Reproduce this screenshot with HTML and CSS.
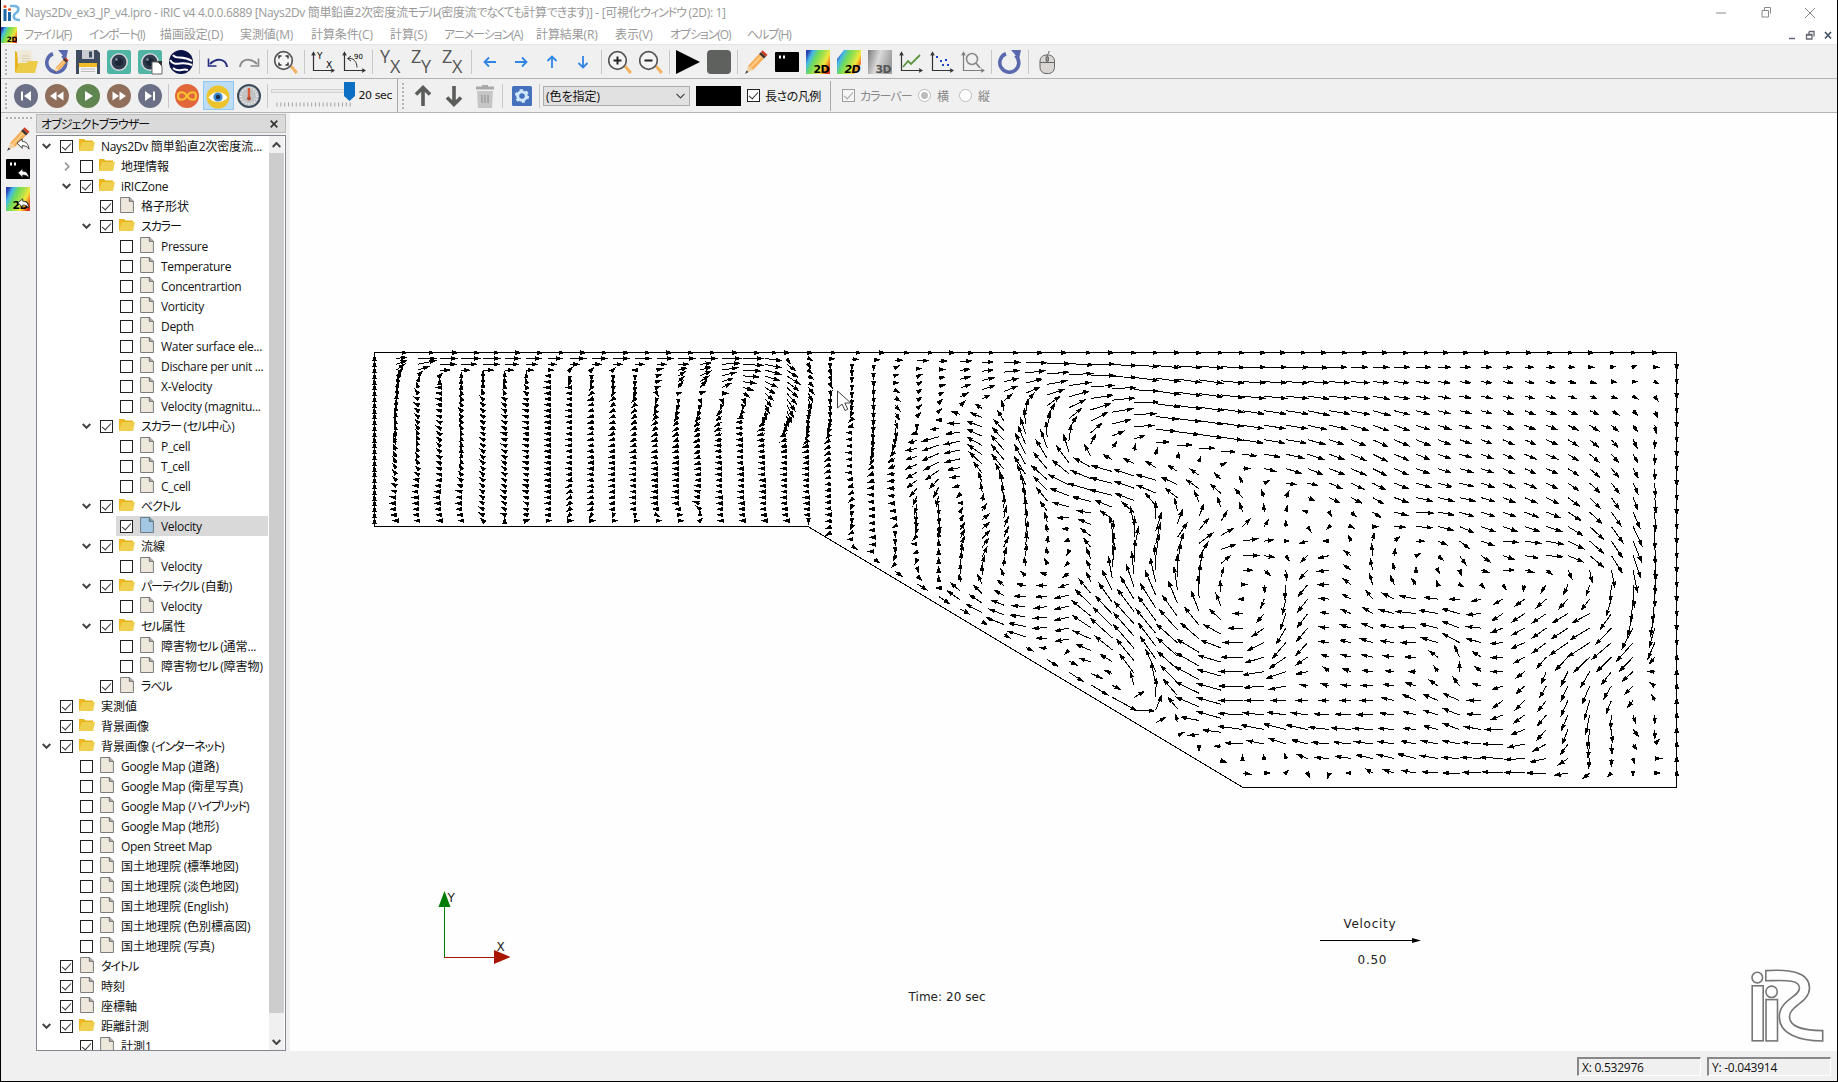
FILE: index.html
```html
<!DOCTYPE html>
<html lang="ja">
<head>
<meta charset="utf-8">
<title>iRIC</title>
<link rel="stylesheet" href="styles.css">
</head>
<body>
<svg class="defs" aria-hidden="true">
  <defs>
    <linearGradient id="rainbow" x1="0" y1="0.25" x2="1" y2="0.75">
      <stop offset="0" stop-color="#2a3fb0"/><stop offset="0.16" stop-color="#45b8e8"/><stop offset="0.36" stop-color="#6edc5a"/>
      <stop offset="0.55" stop-color="#a8e04c"/><stop offset="0.74" stop-color="#f2e83c"/><stop offset="0.88" stop-color="#f08a28"/><stop offset="1" stop-color="#e0301e"/>
    </linearGradient>
    <linearGradient id="greys" x1="0" y1="0" x2="1" y2="0.3">
      <stop offset="0" stop-color="#7c7c7c"/><stop offset="0.5" stop-color="#dadada"/><stop offset="1" stop-color="#a0a0a0"/>
    </linearGradient>
    <symbol id="folder" viewBox="0 0 16 14"><path d="M0 12V1h5l1.5 1.5H14V4H3z" fill="#e8b41c"/><path d="M3.2 4H16l-2 9H0z" fill="#eed04e"/><path d="M0 2v11l3-8V2z" fill="#edb820"/></symbol>
    <symbol id="page" viewBox="0 0 14 16"><path d="M.6.5h9L13.4 4v11.5H.6z" fill="#eee8dc" stroke="#7c7c7c"/><path d="M9.3.5V4.300h4" fill="#bbb" stroke="#666"/></symbol>
    <symbol id="page-on" viewBox="0 0 14 16"><path d="M.6.5h9L13.4 4v11.5H.6z" fill="#a2c8e4" stroke="#6c7c88"/><path d="M9.3.5V4.300h4" fill="#8ab" stroke="#566"/></symbol>
    <symbol id="pencil" viewBox="0 0 24 24"><path d="M4 16L15 4l5 4.500L9 20z" fill="#f6ac54"/><path d="M6 18L17.500 6" stroke="#fbcb85" stroke-width="2"/><path d="M15 4l2-2 5 4.500-2 2z" fill="#45352e"/><path d="M17 2l1.500-1.700 5 4.500L22 6.500z" fill="#d23c22"/><path d="M4 16l5 4-7 3z" fill="#f1d3a4"/><path d="M1 24l1.500-3.500L4.500 22z" fill="#3b3f55"/></symbol>
    <symbol id="reply" viewBox="0 0 16 14"><path d="M1 6l6-5v3c5 0 7 3 8 9-2-3-4-4-8-4v3z" fill="#fff" stroke="#222"/></symbol>
    <symbol id="console" viewBox="0 0 24 24"><rect y="2" width="24" height="20" rx="1"/><path d="M4 5.500h2v3H4zM8 5.500h2v3H8z" fill="#fff"/></symbol>
    <symbol id="lens" viewBox="0 0 24 24"><path d="M16 17l2-2 6 7-2.500 2z" fill="#f3b260"/><circle cx="9.500" cy="10.500" r="8.800" fill="#f4f4f4" stroke="#55575a" stroke-width="1.700"/></symbol>
    <symbol id="axes" viewBox="0 0 24 24"><path d="M2.500 3v17.500H22M.8 5.500L2.500 2.500l1.700 3M20 18.800l3 1.700-3 1.700" fill="none" stroke="#333" stroke-width="1.200"/></symbol>
    <symbol id="spin" viewBox="0 0 24 24"><path d="M17.500 5.500A9.500 9.500 0 1 1 8 3.800" fill="none" stroke="#5a69ae" stroke-width="3.600"/><path d="M13 0h10l-2 9z" fill="#5a69ae"/></symbol>
    <symbol id="camera" viewBox="0 0 24 24"><rect width="24" height="24" rx="2.500" fill="#50b5a4"/><circle cx="12" cy="12" r="9" fill="#d2d6da"/><circle cx="12" cy="12" r="7.400" fill="#303c4e"/><circle cx="12" cy="12" r="4" fill="#1d2636"/><circle cx="9.500" cy="9.500" r="1.300" fill="#8c98a8"/></symbol>
  </defs>
</svg>
<div class="window">
  <header class="titlebar">
    <svg class="app-icon" width="18" height="18" viewBox="0 0 18 18"><path d="M2 5v12M6.500 8v9" stroke="#1d67a8" stroke-width="3"/><circle cx="2" cy="2.500" r="1.600" fill="#e0552b"/><circle cx="6.500" cy="5.500" r="1.600" fill="#e0552b"/><path d="M7 2h4c6 0 5 5 2 7s-4 7 4 7" fill="none" stroke="#74b4e2" stroke-width="2.600"/></svg>
    <span class="title">Nays2Dv_ex3_JP_v4.ipro - iRIC v4 4.0.0.6889 [Nays2Dv 簡単鉛直2次密度流<span class="kana">モデル</span>(密度流<span class="kana">でなくても</span>計算<span class="kana">できます</span>)] - [可視化<span class="kana">ウィンドウ</span> (2D): 1]</span>
    <svg class="caption" width="110" height="14" viewBox="0 0 110 14"><path d="M2 7h10M50.500 1.500h6v6M48 4.500h6.500V11H48zM50.500 4V1.500M91 2l10 10M101 2L91 12" fill="none" stroke="#8a8a8a"/></svg>
  </header>
  <nav class="menubar">
    <svg class="mdi-icon" width="16" height="16" viewBox="0 0 24 24"><rect width="24" height="24" fill="url(#rainbow)"/><text x="24" y="23" text-anchor="end" class="icon-text">2D</text></svg>
    <span class="m1 kana">ファイル(F)</span><span class="m2 kana">インポート(I)</span><span class="m3">描画設定(D)</span><span class="m4">実測値(M)</span><span class="m5">計算条件(C)</span><span class="m6">計算(S)</span><span class="m7 kana">アニメーション(A)</span><span class="m8">計算結果(R)</span><span class="m9">表示(V)</span><span class="m10 kana">オプション(O)</span><span class="m11 kana">ヘルプ(H)</span>
    <svg class="mdi-controls" width="50" height="12" viewBox="0 0 50 12"><path d="M2 9.500h6M22 2.500h5v5M19.500 5.500H25V10h-5.500zM22 5V2.500M19.500 6H25" fill="none" stroke="#667" stroke-width="1.300"/><path d="M38 3l6 6.500M44 3l-6 6.500" stroke="#456" stroke-width="1.700"/></svg>
  </nav>
  <div class="toolbar">
    <i class="grip"></i>
    <b><svg viewBox="0 0 24 24"><path d="M1 23V1l2 1 4 14z" fill="#e6b51e"/><path d="M3 1l14-1 2 14H4z" fill="#f0e9d8"/><path d="M8 6h7M8 8.500h8M8 11h8" stroke="#d8cdb5"/><path d="M1 23l4-10h7l3-2h9l-3 12z" fill="#eccb48"/></svg></b>
    <b><svg viewBox="0 0 24 24"><use href="#spin"/><use href="#pencil" x="8" y="7" width="16" height="16"/></svg></b>
    <b><svg viewBox="0 0 24 24"><path d="M0 0h21l3 3v21H0z" fill="#3f4c60"/><path d="M6 0h12v9H6z" fill="#c9cdd1"/><path d="M13 1.500h3v6h-3z" fill="#3f4c60"/><path d="M3 13h18v11H3z" fill="#f2f2f2"/><path d="M3 13h18v4H3z" fill="#efba27"/><path d="M5 19h14M5 21.500h14" stroke="#bbb"/></svg></b>
    <b><svg viewBox="0 0 24 24"><use href="#camera"/></svg></b>
    <b><svg viewBox="0 0 24 24"><use href="#camera"/><path d="M14 12h6l4 4v8H14z" fill="#fff" stroke="#666"/><path d="M19 11h5v5z" fill="#333"/></svg></b>
    <b><svg viewBox="0 0 24 24"><circle cx="12" cy="12" r="12" fill="#0b1246"/><path d="M4 5c3 5 9 0 19 6M1 10c5 8 11 0 22 5M4 18c5 5 9 0 15 2" fill="none" stroke="#fff" stroke-width="2"/></svg></b>
    <i class="sep"></i>
    <b><svg viewBox="0 0 24 24"><path d="M21 17c-1-8-10-10-17-3" fill="none" stroke="#242e80" stroke-width="2"/><path d="M2.500 8.500v7.500h8" fill="none" stroke="#242e80" stroke-width="1.600"/></svg></b>
    <b><svg viewBox="0 0 24 24"><path d="M3 17c1-8 10-10 17-3" fill="none" stroke="#8b8b8b" stroke-width="2"/><path d="M21.500 8.500v7.500h-8" fill="none" stroke="#8b8b8b" stroke-width="1.600"/></svg></b>
    <i class="sep"></i>
    <b><svg viewBox="0 0 24 24"><use href="#lens"/><path d="M5 8.500V6h2.500M11.500 6H14v2.500M14 12.500V15h-2.500M7.500 15H5v-2.500" fill="none" stroke="#333" stroke-width="1.500"/></svg></b>
    <i class="sep"></i>
    <b><svg viewBox="0 0 24 24"><use href="#axes"/><text x="6" y="9" class="axis-text">Y</text><text x="15" y="18" class="axis-text">X</text></svg></b>
    <b><svg viewBox="0 0 24 24"><use href="#axes"/><path d="M6 8.500c5-1 9 3 9 9M9 6L5.500 8.500 9 11" fill="none" stroke="#333"/><text x="12" y="9" class="small-text">90</text></svg></b>
    <i class="sep"></i>
    <b><svg viewBox="0 0 24 24"><text x="1" y="13" class="plane-text">Y</text><text x="11" y="23" class="plane-text">X</text></svg></b>
    <b><svg viewBox="0 0 24 24"><text x="1" y="13" class="plane-text">Z</text><text x="11" y="23" class="plane-text">Y</text></svg></b>
    <b><svg viewBox="0 0 24 24"><text x="1" y="13" class="plane-text">Z</text><text x="11" y="23" class="plane-text">X</text></svg></b>
    <i class="sep"></i>
    <b><svg viewBox="0 0 24 24"><path d="M18 12H7m4-4.500L6.500 12l4.500 4.500" class="move"/></svg></b>
    <b><svg viewBox="0 0 24 24"><path d="M6 12h11m-4-4.500l4.500 4.500-4.500 4.500" class="move"/></svg></b>
    <b><svg viewBox="0 0 24 24"><path d="M12 18V7m-4.500 4L12 6.500l4.500 4.500" class="move"/></svg></b>
    <b><svg viewBox="0 0 24 24"><path d="M12 6v11m-4.500-4l4.500 4.500 4.500-4.500" class="move"/></svg></b>
    <i class="sep"></i>
    <b><svg viewBox="0 0 24 24"><use href="#lens"/><path d="M5.500 10.500h8M9.500 6.500v8" stroke="#222" stroke-width="2"/></svg></b>
    <b><svg viewBox="0 0 24 24"><use href="#lens"/><path d="M5.500 10.500h8" stroke="#222" stroke-width="2"/></svg></b>
    <i class="sep"></i>
    <b><svg viewBox="0 0 24 24"><path d="M0 0l24 12L0 24z"/></svg></b>
    <b><svg viewBox="0 0 24 24"><rect width="24" height="24" rx="4" fill="#5f615f"/></svg></b>
    <i class="sep"></i>
    <b><svg viewBox="0 0 24 24"><use href="#pencil"/></svg></b>
    <b><svg viewBox="0 0 24 24"><use href="#console"/></svg></b>
    <b><svg viewBox="0 0 24 24"><rect width="24" height="24" fill="url(#rainbow)"/><text x="23" y="23" text-anchor="end" class="icon-text">2D</text></svg></b>
    <b><svg viewBox="0 0 24 24"><path d="M7 0h17v14l-7 10H0V9z" fill="url(#rainbow)"/><text x="23" y="23" text-anchor="end" class="icon-text slanted">2D</text></svg></b>
    <b><svg viewBox="0 0 24 24"><rect width="24" height="24" fill="url(#greys)"/><text x="23" y="23" text-anchor="end" class="icon-text dim">3D</text></svg></b>
    <b><svg viewBox="0 0 24 24"><use href="#axes"/><path d="M4 17l5-6 3 3 9-9" fill="none" stroke="#5c9440" stroke-width="1.800"/></svg></b>
    <b><svg viewBox="0 0 24 24"><use href="#axes"/><path d="M6 6h2v2H6zM10 10h2v2h-2zM15 9h2v2h-2zM12 14h2v2h-2zM17 14h2v2h-2z" fill="#1b43c8"/></svg></b>
    <b class="faded"><svg viewBox="0 0 24 24"><use href="#axes"/><circle cx="11" cy="9" r="5.500" fill="none" stroke="#444" stroke-width="1.500"/><path d="M15 13l4 5" stroke="#444" stroke-width="1.800"/></svg></b>
    <i class="sep"></i>
    <b><svg viewBox="0 0 24 24"><use href="#spin"/></svg></b>
    <i class="sep"></i>
    <b><svg viewBox="0 0 24 24"><path d="M12 7c0-4 2-2 2-6" fill="none" stroke="#555"/><rect x="5" y="5" width="14.500" height="18.500" rx="6" fill="#d8d5d2" stroke="#666"/><path d="M5 12.500h14.500M12.200 5v7" stroke="#666"/><rect x="11" y="7" width="2.500" height="4" fill="#999" stroke="#555" stroke-width=".7"/></svg></b>
  </div>
  <div class="toolbar second">
    <i class="grip"></i>
    <b><svg viewBox="0 0 24 24"><circle cx="12" cy="12" r="12" fill="#6b7086"/><path d="M8 7.500v9" stroke="#fff" stroke-width="2"/><path d="M17 7v10l-7-5z" fill="#fff"/></svg></b>
    <b><svg viewBox="0 0 24 24"><circle cx="12" cy="12" r="12" fill="#8f6f5c"/><path d="M11.500 7.500v9L5 12zM18.500 7.500v9L12 12z" fill="#fff"/></svg></b>
    <b><svg viewBox="0 0 24 24"><circle cx="12" cy="12" r="12" fill="#5f8550"/><path d="M9 7v10l8-5z" fill="#fff"/></svg></b>
    <b><svg viewBox="0 0 24 24"><circle cx="12" cy="12" r="12" fill="#8f6f5c"/><path d="M5.500 7.500v9L12 12zM12.500 7.500v9L19 12z" fill="#fff"/></svg></b>
    <b><svg viewBox="0 0 24 24"><circle cx="12" cy="12" r="12" fill="#6b7086"/><path d="M16 7.500v9" stroke="#fff" stroke-width="2"/><path d="M7 7v10l7-5z" fill="#fff"/></svg></b>
    <i class="sep"></i>
    <b><svg viewBox="0 0 24 24"><circle cx="12" cy="12" r="12" fill="#e1663a"/><path d="M12 12c-3-5-9-5-9 0s6 5 9 0 9-5 9 0-6 5-9 0z" fill="none" stroke="#f7c032" stroke-width="2.200"/></svg></b>
    <b class="active"><svg viewBox="0 0 24 24"><circle cx="12" cy="13" r="11.500" fill="#edc32c"/><path d="M2.500 13.500C7 6.500 17 6.500 21.500 13.500 17 19.500 7 19.500 2.500 13.500z" fill="#fff"/><circle cx="12" cy="13" r="4.600" fill="#3a86d0"/><circle cx="12" cy="13" r="2.200" fill="#1d2f4c"/></svg></b>
    <b><svg viewBox="0 0 24 24"><circle cx="12" cy="12" r="11" fill="#c2c4c6" stroke="#3f4b5a" stroke-width="2"/><circle cx="12" cy="12" r="8" fill="none" stroke="#eee" stroke-dasharray="1 2" stroke-width="2"/><path d="M12 4v10" stroke="#d9603b" stroke-width="2.400"/><circle cx="12" cy="14.500" r="2" fill="#b04c30"/></svg></b>
    <i class="sep"></i>
    <svg class="slider" width="88" height="30" viewBox="0 0 88 30"><rect x=".5" y="8.500" width="79" height="3" fill="#e8e9e9" stroke="#d2d2d2"/><path d="M5.500 23.500h75" stroke="#a8a29c" stroke-width="4" stroke-dasharray="1 2.850"/><path d="M73 1h11v14l-5.500 5-5.500-5z" fill="#0d6fc4"/></svg>
    <span class="seconds">20 sec</span>
    <i class="edge"></i>
    <i class="grip"></i>
    <b><svg viewBox="0 0 24 24"><path d="M12 22V4M5 10.500L12 3.500l7 7" fill="none" stroke="#5b5d5b" stroke-width="3.600"/></svg></b>
    <b><svg viewBox="0 0 24 24"><path d="M12 2v18M5 13.500l7 7 7-7" fill="none" stroke="#5b5d5b" stroke-width="3.600"/></svg></b>
    <b><svg viewBox="0 0 24 24"><path d="M3 4h18M9 2.500h6" stroke="#a9a9a9" stroke-width="3"/><path d="M4 7h16l-1 17H5z" fill="#c6c6c6"/><path d="M9 11v8M12 11v8M15 11v8" stroke="#9c9c9c" stroke-width="1.400"/></svg></b>
    <i class="sep"></i>
    <b><svg viewBox="0 0 24 24"><rect x="2" y="2" width="20" height="20" rx="1.500" fill="#4470bc"/><circle cx="12" cy="12" r="4.300" fill="none" stroke="#cfe8fb" stroke-width="3"/><circle cx="12" cy="12" r="6" fill="none" stroke="#cfe8fb" stroke-width="2.200" stroke-dasharray="3 3.300"/></svg></b>
    <i class="sep"></i>
    <span class="combo">(色を指定)<svg width="9" height="6" viewBox="0 0 9 6"><path d="M.5.8l4 4 4-4" fill="none" stroke="#444" stroke-width="1.200"/></svg></span>
    <i class="swatch"></i>
    <i class="check on"></i><span class="legend-label">長さの凡例</span>
    <i class="edge tall"></i>
    <i class="check on off"></i><span class="bar-label">カラーバー</span>
    <i class="radio chosen"></i><span class="side-label">横</span><i class="radio"></i><span class="side-label">縦</span>
  </div>
  <main class="body">
    <aside class="dock">
      <i class="grip flat"></i>
      <svg viewBox="0 0 24 24"><use href="#pencil"/><use href="#reply" x="10" y="11" width="14" height="12"/></svg>
      <svg viewBox="0 0 24 24"><use href="#console"/><use href="#reply" x="11" y="11" width="13" height="11"/></svg>
      <svg viewBox="0 0 24 24"><rect width="24" height="24" fill="url(#rainbow)"/><text x="22" y="22" text-anchor="end" class="icon-text">2D</text><use href="#reply" x="11" y="11" width="13" height="11"/></svg>
    </aside>
    <section class="browser">
      <h2 class="panel-title"><span>オブジェクトブラウザー</span><svg width="8" height="8" viewBox="0 0 8 8"><path d="M.7.7l6.600 6.600M7.300.7L.7 7.300" stroke="#333" stroke-width="1.700"/></svg></h2>
      <div class="tree-frame">
        <div class="tree" id="tree"></div>
        <div class="scrollbar"><svg width="9" height="6" viewBox="0 0 9 6"><path d="M.7 5l3.800-4 3.800 4" class="chev"/></svg><i class="thumb"></i><svg width="9" height="6" viewBox="0 0 9 6"><path d="M.7 1l3.800 4 3.800-4" class="chev"/></svg></div>
      </div>
    </section>
    <svg class="view" width="1547" height="938" viewBox="290 113 1547 938">
      <path d="M374.500 352.500H1676.500V787.500H1243L808 526.500H374.500z" class="outline"/>
      <path id="shafts" class="shafts"/>
      <path id="heads" class="heads"/>
      <path d="M837.500 391v17l4.500-4 3 6.500 2.800-1.200-3-6.300h6z" fill="#fff" fill-opacity=".8" stroke="#444"/>
      <path d="M444.500 957.500V907" stroke="#007c00"/><path d="M438.500 907l6-16 6 16z" fill="#007c00"/>
      <path d="M444 957.500h50" stroke="#a81400"/><path d="M494 950l16.500 7-16.500 7z" fill="#a81400"/>
      <text x="447.500" y="901.500" class="label">Y</text><text x="496.500" y="951" class="label">X</text>
      <text x="908.500" y="1001" class="label" textLength="77">Time: 20 sec</text>
      <text x="1343.500" y="928" class="label" textLength="52">Velocity</text><text x="1357.500" y="963.500" class="label" textLength="29">0.50</text>
      <path d="M1320 940.500h95" stroke="#000"/><path d="M1412 938l9 2.500-9 2.500z"/>
      <g fill="#fff" stroke="#767676" stroke-width="1.600"><circle cx="1757.300" cy="977.600" r="5.300"/><rect x="1752.200" y="985.800" width="11" height="55"/><circle cx="1771.600" cy="991.800" r="5.700"/><rect x="1766" y="999.600" width="11.500" height="41.300"/>
      <path d="M1765.800 970.600C1790 969 1809.500 972 1809.500 988C1809.500 1002 1789.500 1006 1789.500 1016.700C1789.500 1027 1805 1030.600 1822.700 1030.600V1041C1799 1041 1779.300 1034 1779.300 1016.700C1779.300 1000 1799.500 997 1799.500 988C1799.500 979 1784 980.500 1765.800 980.800z"/></g>
    </svg>
  </main>
  <footer class="status"><span>X: 0.532976</span><span>Y: -0.043914</span></footer>
</div>
<script src="script.js"></script>
</body>
</html>
```
FILE: styles.css
```css
body { margin: 0; width: 1838px; height: 1082px; overflow: hidden; background: #fff; font: 12px "Open Sans", "Noto Sans CJK JP", sans-serif; font-feature-settings: "palt"; color: #111; }
.defs { position: absolute; width: 0; height: 0; }
.window { box-sizing: border-box; width: 1838px; height: 1082px; display: flex; flex-direction: column; background: #f0f0f0; border: solid #000; border-width: 0 1px 1px 1px; }
.titlebar, .menubar { display: flex; align-items: center; background: #fff; color: #999; white-space: nowrap; line-height: 20px; }
.titlebar { height: 25px; }
.app-icon { margin: 0 4px 0 2px; flex: none; }
.title { width: 704px; letter-spacing: -0.34px; flex: none; }
.caption { margin-left: 985px; flex: none; }
.menubar { height: 19px; border-bottom: 1px solid #e4e4e4; }
.menubar span { letter-spacing: -0.1px; flex: none; }
.mdi-icon { margin-right: 7px; flex: none; }
.m1 { width: 65px; } .m2 { width: 71px; } .m3 { width: 80px; } .m4 { width: 71px; } .m5 { width: 79px; } .m6 { width: 54px; }
.m7 { width: 92px; } .m8 { width: 79px; } .m9 { width: 55px; } .m10 { width: 77px; } .m11 { width: 50px; }
.kana, .menubar .kana { letter-spacing: -1.1px; }
.mdi-controls { margin-left: 990px; }
.toolbar { height: 33px; display: flex; align-items: center; border-bottom: 1px solid #b4b4b4; flex: none; white-space: nowrap; }
.toolbar b { width: 31px; height: 29px; display: flex; align-items: center; justify-content: center; flex: none; box-sizing: border-box; }
.toolbar b svg { width: 24px; height: 24px; overflow: visible; }
.toolbar .active { background: #bcdcf4; border: 1px solid #90c8f6; }
.faded { opacity: 0.6; }
.grip { width: 2px; height: 26px; margin: 0 3px 0 4px; flex: none; background: repeating-linear-gradient(#b4b4b4 0 2px, #f0f0f0 2px 4px); }
.toolbar .grip { margin-right: 3.5px; }
.grip.flat { width: 26px; height: 2px; margin: 4px 0 8px; background: repeating-linear-gradient(90deg, #b4b4b4 0 2px, #f0f0f0 2px 4px); }
.sep { width: 6px; height: 24px; flex: none; background: linear-gradient(90deg, transparent 2px, #c8c8c8 2px 3px, transparent 3px); }
.edge { width: 1px; height: 33px; background: #a8a8a8; flex: none; }
.tall { height: 30px; margin: 0 11px 0 11px; }
.slider { flex: none; }
.seconds { width: 38px; letter-spacing: -0.4px; font-family: "DejaVu Sans", sans-serif; font-size: 11px; flex: none; }
.combo { box-sizing: border-box; width: 147px; height: 20px; border: 1px solid #adadad; background: #e1e1e1; display: flex; align-items: center; justify-content: space-between; padding: 0 4px 0 2px; flex: none; }
.swatch { width: 45px; height: 20px; background: #000; margin: 0 6px; flex: none; }
.check { box-sizing: border-box; width: 13px; height: 13px; border: 1px solid #222; background: #fff; flex: none; display: block; }
.check.on::after { content: ""; display: block; box-sizing: border-box; width: 9px; height: 5px; margin: 2px 0 0 1px; border: solid #333; border-width: 0 0 1.500px 1.500px; transform: rotate(-48deg); }
.check.off { opacity: 0.4; }
.legend-label { width: 54px; margin-left: 5px; letter-spacing: -0.5px; flex: none; }
.bar-label { width: 58px; margin-left: 5px; color: #888; letter-spacing: -0.9px; flex: none; }
.side-label { width: 18px; margin-left: 6px; color: #888; flex: none; }
.radio { box-sizing: border-box; width: 13px; height: 13px; border: 1px solid #bbb; border-radius: 50%; background: #fff; margin-left: 4px; flex: none; }
.radio.chosen { margin-left: 0; background: radial-gradient(#bbb 0 3px, #fff 4px); }
.icon-text { font: bold 11px "DejaVu Sans", sans-serif; letter-spacing: -0.7px; }
.slanted { font-style: italic; }
.dim { fill: #555; }
.axis-text { font: 9px "DejaVu Sans", sans-serif; }
.small-text { font: 7px "DejaVu Sans", sans-serif; }
.plane-text { font: 18px "Open Sans", sans-serif; fill: #555; }
.move { fill: none; stroke: #2f84e4; stroke-width: 1.800; }
.body { display: flex; height: 939px; flex: none; }
.dock { width: 35px; display: flex; flex-direction: column; align-items: center; }
.dock svg { width: 24px; height: 24px; margin: 0 1px 6px 0; }
.browser { width: 250px; margin-right: 4px; display: flex; flex-direction: column; padding-top: 1px; }
.panel-title { box-sizing: border-box; height: 19px; margin: 0 0 2px; border: 1px solid #bcbcbc; background: #dadada; font: inherit; display: flex; align-items: center; justify-content: space-between; padding: 0 7px 0 4px; letter-spacing: -0.9px; }
.tree-frame { box-sizing: border-box; height: 916px; border: 1px solid #828790; background: #fff; display: flex; }
.tree { width: 231px; overflow: hidden; flex: none; }
.row { display: flex; height: 20px; align-items: center; white-space: pre; letter-spacing: -0.3px; }
.twist { width: 19px; height: 16px; display: flex; align-items: center; justify-content: center; flex: none; }
.entry { display: flex; align-items: center; height: 20px; padding-left: 4px; flex: 1; }
.selected { background: #d9d9d9; }
.entry .glyph { width: 16px; height: 16px; margin: -2px 6px 0 6px; flex: none; }
.han { letter-spacing: 0; }
.chev { fill: none; stroke: #444; stroke-width: 2; }
.closed { fill: none; stroke: #999; stroke-width: 1.700; }
.scrollbar { width: 15px; margin-left: 1px; display: flex; flex-direction: column; align-items: center; background: #f0f0f0; }
.scrollbar svg { margin: 6px 0 5px; }
.thumb { width: 15px; height: 860px; background: #cdcdcd; margin-bottom: 20px; }
.view { flex: none; background: #fefefe; }
.outline { fill: none; stroke: #000; shape-rendering: crispEdges; }
.shafts { fill: none; stroke: #000; stroke-width: 1; shape-rendering: crispEdges; }
.heads { fill: #000; shape-rendering: crispEdges; }
.label { font: 12px "DejaVu Sans", sans-serif; fill: #222; }
.status { flex: 1; display: flex; justify-content: flex-end; align-items: center; gap: 6px; padding: 0 6px 1px 0; }
.status span { box-sizing: border-box; width: 124px; height: 19px; border: 1px solid #fff; border-top: 2px solid #888; border-left: 2px solid #888; padding-left: 3px; line-height: 17px; letter-spacing: -0.25px; }
```
FILE: script.js
```js
// Object browser rows: level, arrow (v open, > closed, - none), checked, icon (f folder, p page, s selected), label
const rows = `0v1f Nays2Dv 簡単鉛直2次密度流...
1>0f 地理情報
1v1f iRICZone
2-1p 格子形状
2v1f スカラー
3-0p Pressure
3-0p Temperature
3-0p Concentrartion
3-0p Vorticity
3-0p Depth
3-0p Water surface ele...
3-0p Dischare per unit ...
3-0p X-Velocity
3-0p Velocity (magnitu...
2v1f スカラー (セル中心)
3-0p P_cell
3-0p T_cell
3-0p C_cell
2v1f ベクトル
3-1s Velocity
2v1f 流線
3-0p Velocity
2v1f パーティクル (自動)
3-0p Velocity
2v1f セル属性
3-0p 障害物セル (通常...
3-0p 障害物セル (障害物)
2-1p ラベル
0-1f 実測値
0-1f 背景画像
0v1f 背景画像 (インターネット)
1-0p Google Map (道路)
1-0p Google Map (衛星写真)
1-0p Google Map (ハイブリッド)
1-0p Google Map (地形)
1-0p Open Street Map
1-0p 国土地理院 (標準地図)
1-0p 国土地理院 (淡色地図)
1-0p 国土地理院 (English)
1-0p 国土地理院 (色別標高図)
1-0p 国土地理院 (写真)
0-1p タイトル
0-1p 時刻
0-1p 座標軸
0v1f 距離計測
1-1p 計測1`.split('\n');
const arrows = {
  'v': '<svg width="9" height="6" viewBox="0 0 9 6"><path class="chev" d="M.7 1l3.800 3.800L8.300 1"/></svg>',
  '>': '<svg width="6" height="9" viewBox="0 0 6 9"><path class="closed" d="M1 .7l3.800 3.800L1 8.300"/></svg>',
  '-': ''
};
const icons = { f: 'folder', p: 'page', s: 'page-on' };
const tighten = s => s.replace(/[ァ-ヶー]+/g, '<span class="kana">$&</span>').replace(/[一-龠]+/g, '<span class="han">$&</span>');
document.getElementById('tree').innerHTML = rows.map(r =>
  `<div class="row" style="padding-left:${r[0] * 20}px"><span class="twist">${arrows[r[1]]}</span>` +
  `<span class="entry${r[3] === 's' ? ' selected' : ''}"><i class="check${r[2] === '1' ? ' on' : ''}"></i>` +
  `<svg class="glyph"><use href="#${icons[r[3]]}"/></svg><span>${tighten(r.slice(5))}</span></span></div>`).join('');

// Velocity samples in pixels, by grid column; each entry is row:dx,dy
const field = {
  1: '0:9,0 1:8,-1 2:8,-3 4:5,-6 6:2,-9 8:1,-9 10:0,-9 12:-1,-8 14:-1,-7 16:-2,-6 18:-2,-4 20:-2,-3 22:-2,-2 24:-3,-1 26:-4,0 28:-3,0 29:-1,0',
  2: '0:14,0 1:15,0 2:15,-3 4:3,-3 6:-1,-3 8:-2,-1 12:-1,-1 16:-1,-3 20:-1,-1 24:-3,0 28:-2,0 29:-1,0',
  3: '0:16,0 1:15,0 2:14,0 3:8,0 4:1,-1 6:-1,0 12:-1,-.5 16:-1,-1 22:-1,0 25:-3,0 28:-1,0 29:0,0',
  4: '0:16,0 1:16,0 2:13,0 3:6,0 4:0,-1 6:0,-1 10:-1,-1 18:0,-2 26:-3,0 28:-2,0 29:0,0',
  5: '0:14,0 1:14,0 2:14,0 3:8,0 4:0,-3 6:0,-3 8:-1,-1 14:-1,-.5 20:-1,-1 28:-2,-1 29:-.5,-.5',
  8: '0:14,0 1:11,0 2:6,0 3:3,0 4:0,0 6:-1,0 14:-1,0 24:-1,0 26:0,0 28:-1,0 29:1,0',
  9: '0:14,0 1:13,0 2:7,0 3:1,-1 4:0,3 6:-1,0 20:-1,0 28:-1,1 29:1,0',
  12: '0:13,0 1:13,0 2:7,0 3:0,0 4:0,2 6:0,3 8:-1,1 14:-2,1 20:-2,0 27:-2,0 28:0,1 29:2,0',
  14: '0:13,0 1:14,0 2:8,0 4:5,-3 6:3,-4 8:0,3 10:-2,4 12:-3,2 16:-3,1 20:-3,0 26:-3,0 28:2,0 29:3,0',
  15: '0:13,0 1:14,0 2:9,-1 4:9,-4 6:5,-5 8:1,3 10:-2,4 12:-4,3 14:-4,2 18:-3,1 22:-2,0 26:-4,-1 28:0,-2 29:1,-1',
  16: '0:14,0 1:17,0 2:16,-1 4:12,-3 6:7,-3 8:1,3 10:-3,3 12:-5,3 16:-4,0 22:-3,0 28:-2,0 29:-1,0',
  17: '0:14,0 1:17,0 2:17,1 4:13,1 6:7,2 8:1,3 10:-2,3 12:-5,0 16:-4,0 22:-3,0 28:-2,0 29:-1,0',
  18: '0:10,0 1:14,2 2:14,3 4:12,4 6:8,5 8:5,6 10:1,6 12:-4,3 14:-5,1 18:-4,0 22:-3,0 28:-2,0 29:-1,0',
  19: '0:1,0 1:2,3 2:7,5 4:11,7 6:9,8 8:7,10 10:4,10 12:-1,5 14:-4,2 18:-3,0 26:-3,0 28:-2,0 29:0,0',
  20: '0:2,0 1:2,1 2:1,2 4:3,2 6:4,5 8:2,8 10:0,8 12:-1,7 14:-2,4 16:-3,1 20:-3,0 28:-2,0 29:0,1',
  21: '0:4,0 1:2,0 2:0,1 5:1,2 7:0,6 10:0,7 12:-2,4 14:-3,2 20:-3,1 26:-2,0 29:-2,1',
  22: '0:7,0 1:4,0 2:0,1 4:0,1 7:0,4 10:-1,1 12:-3,0 18:-3,0 22:-1,1 25:0,2 28:-2,0 29:3,2',
  23: '0:9,0 1:4,0 2:0,1 5:0,5 8:0,7 12:-1,7 14:-2,5 16:-3,2 20:-3,0 27:-1,0 28:-3,0 29:4,3',
  24: '0:12,0 1:5,0 2:2,-1 4:1,0 6:3,2 8:3,5 10:1,8 12:-2,5 14:-5,3 16:-5,1 18:-5,0 20:-4,0 22:-2,0 24:0,1 26:0,2 28:-2,2 29:5,4',
  25: '0:14,0 1:9,0 2:2,0 4:3,-2 6:3,-2 8:2,-2 9:0,3 10:-3,1 11:-7,2 12:-9,2 14:-9,4 16:-8,6 18:-3,7 20:-1,8 22:-1,4 24:-3,0 26:-1,2 28:3,3 29:8,5',
  26: '0:14,0 1:6,0 2:4,0 4:4,-1 6:2,-2 8:0,0 9:-6,1 10:-14,4 12:-14,6 14:-11,8 16:-4,8 18:0,9 20:1,10 22:0,-4 24:0,-3 26:0,-2 28:0,0 29:9,6',
  27: '0:11,0 2:7,-1 4:8,-3 6:3,-3 7:-6,-2 8:-10,0 10:-14,3 12:-13,3 14:-8,1 16:-2,2 18:1,-2 20:3,-5 22:3,-8 24:1,-10 26:-1,-6 27:-8,-7 28:-11,-8 29:7,4',
  28: '0:10,0 1:9,0 2:9,-1 4:11,-4 5:6,-3 6:-5,-3 8:-13,-5 10:-13,-7 12:-11,-10 14:-3,-8 16:1,-5 18:5,-4 20:6,-6 22:4,-8 24:0,-8 26:-7,-7 28:-14,-7 29:3,2',
  30: '0:15,0 1:19,0 2:17,-2 4:12,-5 6:2,-12 8:-4,-13 10:-9,-18 12:-10,-16 14:-4,-18 16:0,-14 18:2,-12 20:1,-9 22:-3,-3 24:-9,0 26:-13,-1 28:-16,-5 29:5,3',
  32: '0:20,0 1:22,1 2:21,-1 4:18,-5 6:11,-9 8:2,-14 10:-11,-15 12:-18,-9 14:-14,-4 15:-9,0 16:-4,0 18:-1,2 20:-4,3 22:-12,3 24:-12,3 26:-11,2 28:6,3 29:12,8',
  33: '0:21,0 2:22,0 4:20,-3 6:15,-8 8:4,-8 9:-5,-9 10:-14,-8 12:-20,-6 14:-11,-2 16:-8,-6 18:-3,-8 20:-3,-7 21:-10,-12 23:-17,-14 25:-15,-7 27:-9,-3 28:9,4 29:15,9',
  34: '0:22,0 1:22,1 2:22,1 4:20,-2 6:16,-4 8:3,-4 9:-7,-4 10:-18,-5 12:-20,-5 14:-10,-7 15:-2,-12 16:1,-19 18:2,-20 20:-9,-18 22:-15,-16 24:-20,-18 26:-10,-6 27:-5,-2 28:6,3 29:22,12',
  35: '0:22,0 2:22,3 4:22,0 6:17,-1 7:9,-3 8:1,-5 9:-8,-4 10:-18,-6 12:-16,-6 13:-10,-9 14:-3,-16 16:4,-20 18:-2,-20 20:-12,-20 22:-18,-20 24:-19,-22 26:-13,-17 27:-3,-11 28:8,-5 29:18,1',
  36: '0:22,0 1:22,2 2:22,3 4:22,3 6:18,2 7:11,0 8:1,-4 9:-8,-5 10:-17,-5 11:-17,-7 12:-9,-11 13:0,-14 14:5,-16 16:3,-20 18:-5,-22 20:-14,-22 22:-18,-22 24:-14,-20 26:-4,-20 28:5,-12 29:8,-4',
  38: '0:22,0 2:21,3 4:22,3 6:21,3 7:13,0 8:1,-3 9:-7,-5 10:-11,-8 12:4,-10 14:12,-9 16:3,-16 18:-1,-20 20:-13,-16 22:-20,-12 24:-22,-12 26:-21,-9 27:-16,-3 28:-8,1 29:0,1',
  40: '0:21,0 1:21,0 2:21,1 4:19,3 6:18,3 8:5,0 9:-2,-4 10:-6,-7 11:-2,-7 12:6,-6 13:13,-2 14:14,0 15:8,0 16:2,0 17:-2,0 18:-7,0 20:-17,0 22:-21,0 24:-21,0 26:-22,-3 27:-15,-1 28:0,-1 29:6,1',
  42: '0:18,0 1:20,0 2:20,1 4:20,3 6:18,3 8:13,4 9:8,1 10:2,-4 12:0,-4 13:1,0 14:2,3 16:-1,12 18:-5,14 20:-12,14 22:-17,6 24:-12,0 26:-20,-5 27:-15,-5 28:-1,-3 29:1,-1',
  43: '0:17,0 2:19,1 4:19,4 6:15,4 8:13,5 9:8,2 10:5,2 11:-3,-1 12:2,3 13:-6,2 14:-5,5 16:-8,10 18:-9,12 20:-10,11 22:-9,2 23:-5,-1 24:-9,0 26:-19,-4 28:-8,-3 29:1,2',
  44: '0:16,0 1:15,0 2:18,1 4:18,3 6:12,4 8:13,5 10:8,4 11:1,2 12:-1,1 13:-4,0 14:-9,2 16:-9,0 18:-7,-1 20:-8,-1 22:-4,-3 24:-7,0 26:-18,-2 28:-12,-1 29:-1,3',
  46: '0:13,0 1:14,0 2:14,1 4:15,4 6:13,6 8:12,6 10:9,5 11:6,4 12:3,0 13:1,-6 14:-1,-9 16:-3,-9 18:-8,-5 20:-10,-3 22:-8,-1 24:-10,0 26:-17,-1 28:-14,-3 29:-5,-3',
  48: '0:11,0 1:12,0 2:11,1 4:11,3 6:12,5 8:11,4 10:14,3 11:15,1 12:14,1 13:6,0 14:2,-1 15:0,-1 16:-3,-4 17:-14,-3 18:-18,-2 20:-13,0 22:-5,0 24:-11,-5 26:-10,-1 28:-16,-4 29:-12,-2',
  50: '0:7,0 1:9,0 2:9,1 4:9,2 6:9,3 8:11,3 10:13,3 12:12,5 13:8,6 14:5,7 15:1,3 16:2,1 17:-8,0 18:-15,-4 20:-15,-8 21:-4,-9 22:0,-7 23:-5,-7 24:-14,-6 26:-14,-5 28:-15,-1 29:-14,0',
  52: '0:6,0 1:7,0 2:8,1 4:8,3 6:9,4 8:9,4 10:10,4 12:12,4 13:13,1 14:9,3 15:9,0 16:2,3 17:-7,4 18:-9,6 20:-10,1 22:-9,0 24:-8,6 25:-10,4 26:-15,0 27:-18,0 28:-20,-1 29:-18,-1',
  54: '0:4,0 1:6,0 2:7,1 4:8,3 6:9,4 8:9,4 10:10,5 12:13,4 13:15,3 14:14,1 15:4,3 16:-4,6 18:-12,8 20:-12,9 22:-4,10 24:-7,9 26:-8,9 28:-14,3 29:-17,0',
  56: '0:2,0 1:2,0 2:4,1 4:7,3 6:7,6 8:8,7 10:9,9 12:12,11 14:12,10 15:2,10 16:-3,9 17:-7,9 18:-15,8 20:-20,13 22:-8,14 24:-5,17 26:-2,16 28:-1,7 29:-5,4',
  58: '0:1,0 1:2,-1 2:2,0 4:3,3 6:3,6 8:4,7 10:4,10 12:8,17 14:7,20 16:1,20 18:-5,20 20:-15,17 22:-9,8 24:-4,5 25:2,6 26:4,5 28:1,3 29:0,1',
  59: '0:1,0 1:2,0 2:2,1 4:2,5 6:0,6 8:0,9 10:1,13 12:0,20 14:1,22 16:0,20 18:-4,20 20:-6,14 21:-4,5 22:-4,0 23:-3,-2 24:-2,-4 25:0,6 26:0,7 27:3,-3 28:4,0 29:3,0'
};
const cols = Object.keys(field).map(Number);
const parsed = {};
cols.forEach(c => {
  parsed[c] = field[c].split(' ').map(s => { const [j, v] = s.split(':'); return [+j, ...v.split(',').map(Number)]; });
});
function atRow(list, j) {
  let k = 1;
  while (k < list.length - 1 && list[k][0] < j) k++;
  const a = list[k - 1], b = list[k], t = (j - a[0]) / (b[0] - a[0]);
  return [a[1] + (b[1] - a[1]) * t, a[2] + (b[2] - a[2]) * t];
}
function velocity(i, j) {
  let k = 0;
  while (k < cols.length - 1 && cols[k + 1] <= i) k++;
  const p = atRow(parsed[cols[k]], j);
  if (k === cols.length - 1) return p;
  const q = atRow(parsed[cols[k + 1]], j), t = (i - cols[k]) / (cols[k + 1] - cols[k]);
  return [p[0] + (q[0] - p[0]) * t, p[1] + (q[1] - p[1]) * t];
}
let shafts = '', heads = '';
function arrow(x, y, u, v) {
  const len = Math.hypot(u, v) || 1, cx = u / len, cy = v / len, ex = x + u, ey = y + v;
  const f = n => n.toFixed(1);
  shafts += `M${f(x)} ${f(y)}L${f(ex)} ${f(ey)}`;
  const bx = ex - cx * 3.4, by = ey - cy * 3.4;
  heads += `M${f(ex + cx * 3.8)} ${f(ey + cy * 3.8)}L${f(bx - cy * 2.3)} ${f(by + cx * 2.3)}L${f(bx + cy * 2.3)} ${f(by - cx * 2.3)}z`;
}
const left = 374.5, top0 = 352.7, dx = 21.7;
for (let j = 1; j < 30; j++) {
  arrow(left, top0 + j * 5.8, 0, -0.5);
  arrow(1676.7, top0 + j * 14.5, 0, j < 21 ? 0.6 : -0.6);
}
for (let i = 1; i < 60; i++) {
  const depth = 173.8 + 13.05 * Math.min(20, Math.max(0, i - 20));
  for (let j = 0; j < 30; j++) {
    let [u, v] = velocity(i, j);
    if (Math.hypot(u, v) < 0.3) u = -0.5;
    arrow(left + dx * i, top0 + depth * j / 30, u, v);
  }
}
document.getElementById('shafts').setAttribute('d', shafts);
document.getElementById('heads').setAttribute('d', heads);
```
